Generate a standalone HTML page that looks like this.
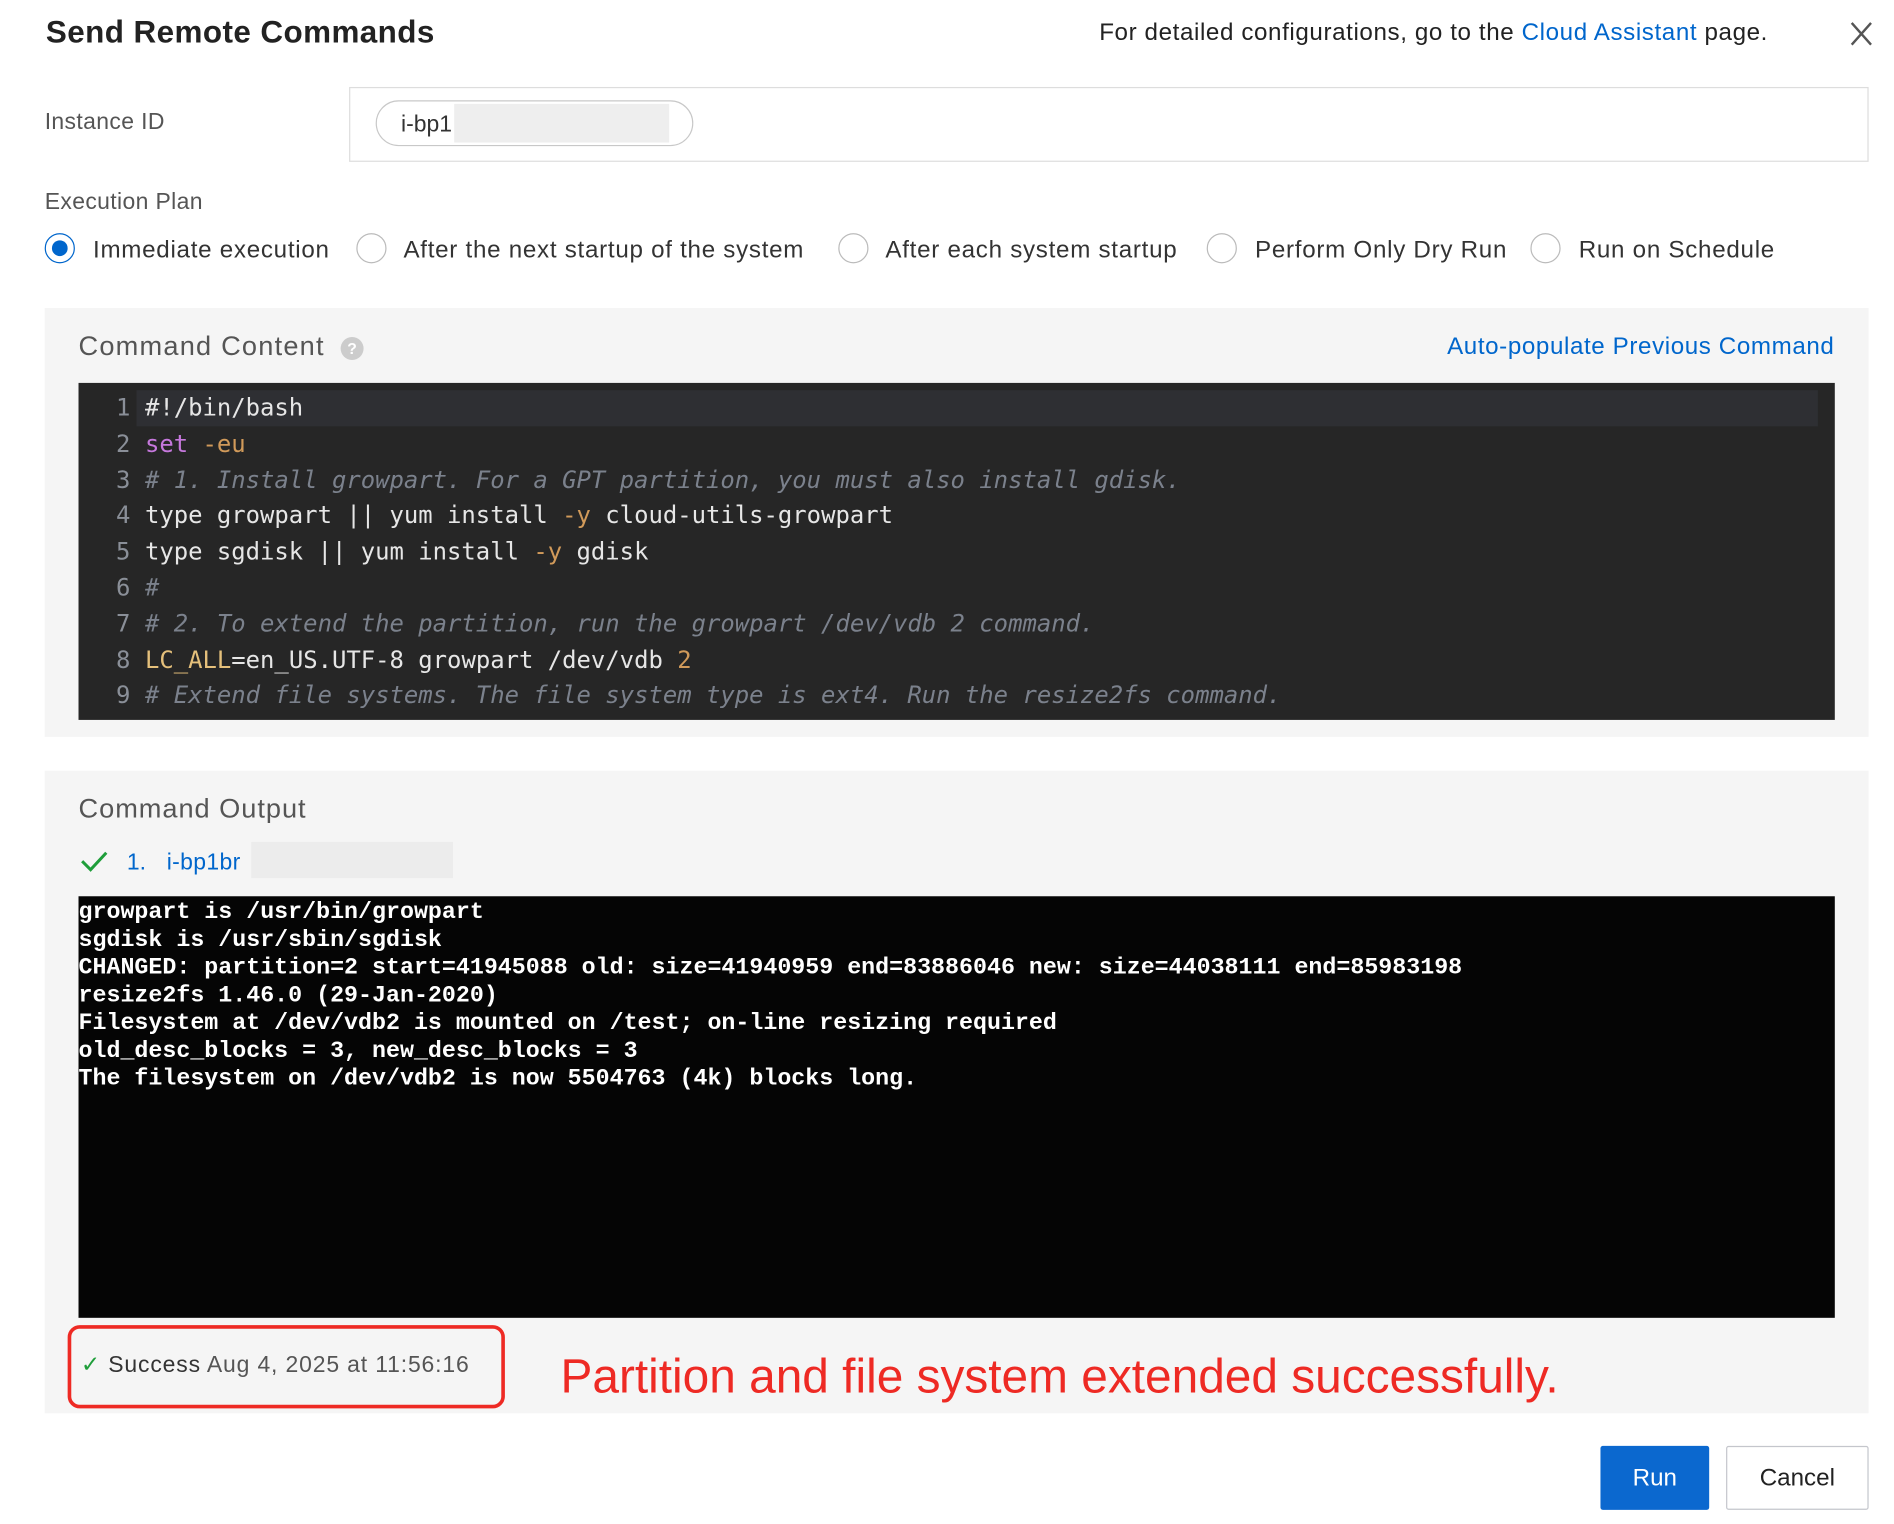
<!DOCTYPE html>
<html><head><meta charset="utf-8"><style>
html,body{margin:0;padding:0;background:#fff;}
body{width:1894px;height:1524px;overflow:hidden;}
#w{position:relative;width:1568px;height:1262px;transform:scale(1.2079);transform-origin:0 0;font-family:"Liberation Sans",sans-serif;color:#333;}
.a{position:absolute;white-space:nowrap;}
.radio{position:absolute;top:193px;width:23px;height:23px;border:1.5px solid #bbb;border-radius:50%;background:#fff;}
.rl{position:absolute;top:196px;font-size:20px;letter-spacing:0.6px;color:#333;white-space:nowrap;}
.code{font-family:"DejaVu Sans Mono",monospace;font-size:19.8px;color:#e6e6e6;}
.ln{position:absolute;left:96px;color:#8a8f98;}
.cl{position:absolute;left:120px;white-space:pre;}
.cm{color:#7b818c;font-style:italic;}
.term{font-family:"Liberation Mono",monospace;font-weight:bold;font-size:19.3px;color:#fff;line-height:23px;white-space:pre;}
</style></head><body><div id="w">
<div class="a" style="left:38px;top:11px;font-size:26px;letter-spacing:0.35px;font-weight:bold;color:#222;">Send Remote Commands</div>
<div class="a" style="left:910px;top:16px;font-size:20px;letter-spacing:0.5px;color:#222;">For detailed configurations, go to the <span style="color:#0066cc">Cloud Assistant</span> page.</div>
<svg class="a" style="left:1532px;top:18px" width="18" height="20"><path d="M1 1L17 19M17 1L1 19" stroke="#555" stroke-width="2"/></svg>

<div class="a" style="left:37px;top:91px;font-size:19px;letter-spacing:0.3px;color:#555;">Instance ID</div>
<div class="a" style="left:289px;top:72px;width:1256px;height:60px;border:1px solid #ddd;"></div>
<div class="a" style="left:311px;top:83px;width:261px;height:36px;border:1.5px solid #c8c8c8;border-radius:20px;"></div>
<div class="a" style="left:332px;top:93px;font-size:19px;color:#333;">i-bp1</div>
<div class="a" style="left:376px;top:86px;width:178px;height:32px;background:#eeeeee;"></div>

<div class="a" style="left:37px;top:157px;font-size:19px;letter-spacing:0.3px;color:#555;">Execution Plan</div>
<div class="radio" style="left:37px;border-color:#0066cc;"><div style="position:absolute;left:5px;top:5px;width:13px;height:13px;border-radius:50%;background:#0066cc"></div></div>
<div class="rl" style="left:77px">Immediate execution</div>
<div class="radio" style="left:295px"></div><div class="rl" style="left:334px">After the next startup of the system</div>
<div class="radio" style="left:694px"></div><div class="rl" style="left:733px">After each system startup</div>
<div class="radio" style="left:999px"></div><div class="rl" style="left:1039px">Perform Only Dry Run</div>
<div class="radio" style="left:1267px"></div><div class="rl" style="left:1307px">Run on Schedule</div>

<div class="a" style="left:37px;top:255px;width:1510px;height:355px;background:#f5f5f5;"></div>
<div class="a" style="left:65px;top:274px;font-size:22.5px;letter-spacing:1px;color:#555;">Command Content</div>
<div class="a" style="left:282px;top:279px;width:19px;height:19px;border-radius:50%;background:#ccc;color:#fff;font-size:13px;text-align:center;line-height:19px;font-weight:bold;">?</div>
<div class="a" style="left:1198px;top:276px;font-size:20px;letter-spacing:0.5px;color:#0066cc;">Auto-populate Previous Command</div>
<div class="a code" style="left:65px;top:317px;width:1454px;height:279px;background:#262626;">
<div style="position:absolute;left:48px;top:6px;width:1392px;height:30px;background:#2e2f33;"></div>
</div>
<div class="a code" style="left:0;top:326px;width:1568px;">
<div class="ln" style="top:0">1</div><div class="cl" style="top:0">#!/bin/bash</div>
<div class="ln" style="top:30px">2</div><div class="cl" style="top:30px"><span style="color:#c678dd">set</span> <span style="color:#d19a5a">-eu</span></div>
<div class="ln" style="top:60px">3</div><div class="cl cm" style="top:60px"># 1. Install growpart. For a GPT partition, you must also install gdisk.</div>
<div class="ln" style="top:89px">4</div><div class="cl" style="top:89px">type growpart || yum install <span style="color:#d19a5a">-y</span> cloud-utils-growpart</div>
<div class="ln" style="top:119px">5</div><div class="cl" style="top:119px">type sgdisk || yum install <span style="color:#d19a5a">-y</span> gdisk</div>
<div class="ln" style="top:149px">6</div><div class="cl cm" style="top:149px">#</div>
<div class="ln" style="top:179px">7</div><div class="cl cm" style="top:179px"># 2. To extend the partition, run the growpart /dev/vdb 2 command.</div>
<div class="ln" style="top:209px">8</div><div class="cl" style="top:209px"><span style="color:#e5c07b">LC_ALL</span>=en_US.UTF-8 growpart /dev/vdb <span style="color:#d19a5a">2</span></div>
<div class="ln" style="top:238px">9</div><div class="cl cm" style="top:238px"># Extend file systems. The file system type is ext4. Run the resize2fs command.</div>
</div>

<div class="a" style="left:37px;top:638px;width:1510px;height:532px;background:#f5f5f5;"></div>
<div class="a" style="left:65px;top:657px;font-size:22.5px;letter-spacing:0.8px;color:#555;">Command Output</div>
<svg class="a" style="left:66px;top:703px" width="24" height="20"><path d="M2 10L9 17L22 3" stroke="#1f9e3a" stroke-width="2.5" fill="none"/></svg>
<div class="a" style="left:105px;top:704px;font-size:19px;color:#0066cc;">1.</div>
<div class="a" style="left:138px;top:704px;font-size:19px;letter-spacing:0.3px;color:#0066cc;">i-bp1br</div>
<div class="a" style="left:208px;top:697px;width:167px;height:30px;background:#ececec;"></div>
<div class="a term" style="left:65px;top:742px;width:1454px;height:347px;background:#050505;padding-top:2px;">growpart is /usr/bin/growpart
sgdisk is /usr/sbin/sgdisk
CHANGED: partition=2 start=41945088 old: size=41940959 end=83886046 new: size=44038111 end=85983198
resize2fs 1.46.0 (29-Jan-2020)
Filesystem at /dev/vdb2 is mounted on /test; on-line resizing required
old_desc_blocks = 3, new_desc_blocks = 3
The filesystem on /dev/vdb2 is now 5504763 (4k) blocks long.</div>

<div class="a" style="left:56px;top:1097px;width:356px;height:63px;border:3px solid #ee2a24;border-radius:10px;"></div>
<div class="a" style="left:67px;top:1119px;font-size:19px;letter-spacing:0.7px;color:#333;"><span style="color:#1f9e3a">✓</span> Success <span style="color:#555">Aug 4, 2025 at 11:56:16</span></div>
<div class="a" style="left:464px;top:1118px;font-size:39.6px;color:#ee2a24;">Partition and file system extended successfully.</div>

<div class="a" style="left:1325px;top:1197px;width:90px;height:53px;background:#0b68cf;border-radius:2px;color:#fff;font-size:20px;text-align:center;line-height:55px;">Run</div>
<div class="a" style="left:1429px;top:1197px;width:116px;height:51px;border:1px solid #c4c6cc;border-radius:2px;color:#222;font-size:20px;text-align:center;line-height:53px;">Cancel</div>
</div></body></html>
